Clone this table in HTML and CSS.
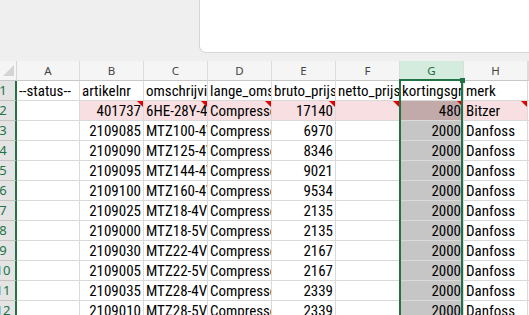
FILE: index.html
```html
<!DOCTYPE html>
<html lang="nl">
<head>
<meta charset="utf-8">
<title>Blad</title>
<link rel="stylesheet" href="styles.css">
</head>
<body>
<div class="top"><div class="panel"></div></div>
<div class="sheet">
  <div class="row hdr">
    <div class="corner"><span class="tri"></span></div>
    <div class="ch">A</div>
    <div class="ch">B</div>
    <div class="ch">C</div>
    <div class="ch">D</div>
    <div class="ch">E</div>
    <div class="ch">F</div>
    <div class="ch on">G</div>
    <div class="ch">H</div>
    <div class="ch">I</div>
  </div>
  <div class="row">
    <div class="rh">1</div>
    <div class="c">--status--</div>
    <div class="c">artikelnr</div>
    <div class="c">omschrijving</div>
    <div class="c">lange_omschrijving</div>
    <div class="c">bruto_prijs</div>
    <div class="c">netto_prijs</div>
    <div class="c">kortingsgroep</div>
    <div class="c">merk</div>
    <div class="c"></div>
  </div>
  <div class="row">
    <div class="rh">2</div>
    <div class="c"></div>
    <div class="c n pk cm">401737</div>
    <div class="c pk cm">6HE-28Y-40P</div>
    <div class="c pk cm">Compressor</div>
    <div class="c n pk cm">17140</div>
    <div class="c pk cm"></div>
    <div class="c n sp cm">480</div>
    <div class="c pk cm">Bitzer</div>
    <div class="c"></div>
  </div>
  <div class="row">
    <div class="rh">3</div>
    <div class="c"></div>
    <div class="c n">2109085</div>
    <div class="c">MTZ100-4VM</div>
    <div class="c">Compressor</div>
    <div class="c n">6970</div>
    <div class="c"></div>
    <div class="c n sg">2000</div>
    <div class="c">Danfoss</div>
    <div class="c"></div>
  </div>
  <div class="row">
    <div class="rh">4</div>
    <div class="c"></div>
    <div class="c n">2109090</div>
    <div class="c">MTZ125-4VM</div>
    <div class="c">Compressor</div>
    <div class="c n">8346</div>
    <div class="c"></div>
    <div class="c n sg">2000</div>
    <div class="c">Danfoss</div>
    <div class="c"></div>
  </div>
  <div class="row">
    <div class="rh">5</div>
    <div class="c"></div>
    <div class="c n">2109095</div>
    <div class="c">MTZ144-4VM</div>
    <div class="c">Compressor</div>
    <div class="c n">9021</div>
    <div class="c"></div>
    <div class="c n sg">2000</div>
    <div class="c">Danfoss</div>
    <div class="c"></div>
  </div>
  <div class="row">
    <div class="rh">6</div>
    <div class="c"></div>
    <div class="c n">2109100</div>
    <div class="c">MTZ160-4VM</div>
    <div class="c">Compressor</div>
    <div class="c n">9534</div>
    <div class="c"></div>
    <div class="c n sg">2000</div>
    <div class="c">Danfoss</div>
    <div class="c"></div>
  </div>
  <div class="row">
    <div class="rh">7</div>
    <div class="c"></div>
    <div class="c n">2109025</div>
    <div class="c">MTZ18-4VM</div>
    <div class="c">Compressor</div>
    <div class="c n">2135</div>
    <div class="c"></div>
    <div class="c n sg">2000</div>
    <div class="c">Danfoss</div>
    <div class="c"></div>
  </div>
  <div class="row">
    <div class="rh">8</div>
    <div class="c"></div>
    <div class="c n">2109000</div>
    <div class="c">MTZ18-5VM</div>
    <div class="c">Compressor</div>
    <div class="c n">2135</div>
    <div class="c"></div>
    <div class="c n sg">2000</div>
    <div class="c">Danfoss</div>
    <div class="c"></div>
  </div>
  <div class="row">
    <div class="rh">9</div>
    <div class="c"></div>
    <div class="c n">2109030</div>
    <div class="c">MTZ22-4VM</div>
    <div class="c">Compressor</div>
    <div class="c n">2167</div>
    <div class="c"></div>
    <div class="c n sg">2000</div>
    <div class="c">Danfoss</div>
    <div class="c"></div>
  </div>
  <div class="row">
    <div class="rh">10</div>
    <div class="c"></div>
    <div class="c n">2109005</div>
    <div class="c">MTZ22-5VM</div>
    <div class="c">Compressor</div>
    <div class="c n">2167</div>
    <div class="c"></div>
    <div class="c n sg">2000</div>
    <div class="c">Danfoss</div>
    <div class="c"></div>
  </div>
  <div class="row">
    <div class="rh">11</div>
    <div class="c"></div>
    <div class="c n">2109035</div>
    <div class="c">MTZ28-4VM</div>
    <div class="c">Compressor</div>
    <div class="c n">2339</div>
    <div class="c"></div>
    <div class="c n sg">2000</div>
    <div class="c">Danfoss</div>
    <div class="c"></div>
  </div>
  <div class="row">
    <div class="rh">12</div>
    <div class="c"></div>
    <div class="c n">2109010</div>
    <div class="c">MTZ28-5VM</div>
    <div class="c">Compressor</div>
    <div class="c n">2339</div>
    <div class="c"></div>
    <div class="c n sg">2000</div>
    <div class="c">Danfoss</div>
    <div class="c"></div>
  </div>
</div>
<div class="selbox"><span class="handle"></span></div>
</body>
</html>
```

FILE: styles.css
```css
* { box-sizing: border-box; margin: 0; padding: 0; }
html, body { width: 529px; height: 315px; overflow: hidden; }
body {
  background: #efefef;
  font-family: "Roboto Condensed", "Liberation Sans", Arial, sans-serif;
  color: #000;
  position: relative;
}
.top { height: 61px; display: flex; }
.panel {
  margin-left: 199px;
  flex: 1;
  height: 53px;
  background: #fff;
  border-left: 1px solid #d6d6d6;
  border-bottom: 1px solid #d6d6d6;
  border-bottom-left-radius: 7px;
}
.row {
  display: grid;
  grid-template-columns: 17px 63px repeat(7, 64px) 1fr;
  height: 20px;
}
.hdr { background: #f5f5f5; }
.corner {
  position: relative;
  border-right: 1px solid #d6d6d6;
  border-bottom: 1px solid #c8c8c8;
}
.tri {
  position: absolute;
  right: 2px;
  bottom: 4px;
  width: 0;
  height: 0;
  border-left: 11px solid transparent;
  border-bottom: 11px solid #d4d4d4;
}
.ch {
  font-family: "Noto Sans", "Open Sans", sans-serif;
  font-size: 11.5px;
  line-height: 19px;
  color: #444;
  text-align: center;
  border-right: 1px solid #dcdcdc;
  border-bottom: 1px solid #c8c8c8;
  overflow: hidden;
}
.ch.on { background: #d3ecdd; color: #1d6b40; }
.rh {
  background: #e4e4e4;
  border-right: 2px solid #217346;
  border-bottom: 1px solid #c4c4c4;
  display: flex;
  justify-content: center;
  padding-right: 9px;
  font-family: "Noto Sans", "Open Sans", sans-serif;
  font-size: 13px;
  line-height: 19px;
  color: #217346;
  white-space: nowrap;
}
.c {
  position: relative;
  background: #fff;
  border-right: 1px solid #dadada;
  border-bottom: 1px solid #dadada;
  font-size: 15px;
  line-height: 17px;
  padding: 2px 2px 0;
  white-space: nowrap;
  overflow: hidden;
}
.n { text-align: right; }
.pk { background: #f8dfe1; }
.sg { background: #c6c6c6; }
.sp { background: #c2aaab; }
.cm::after {
  content: "";
  position: absolute;
  top: 0;
  right: 0;
  border-top: 6px solid #e00000;
  border-left: 6px solid transparent;
}
.selbox {
  position: absolute;
  left: 399px;
  top: 79px;
  width: 64px;
  height: 240px;
  border: 2px solid #217346;
  border-bottom: none;
}
.handle {
  position: absolute;
  right: -4px;
  top: -3px;
  width: 5px;
  height: 5px;
  background: #217346;
}
```
